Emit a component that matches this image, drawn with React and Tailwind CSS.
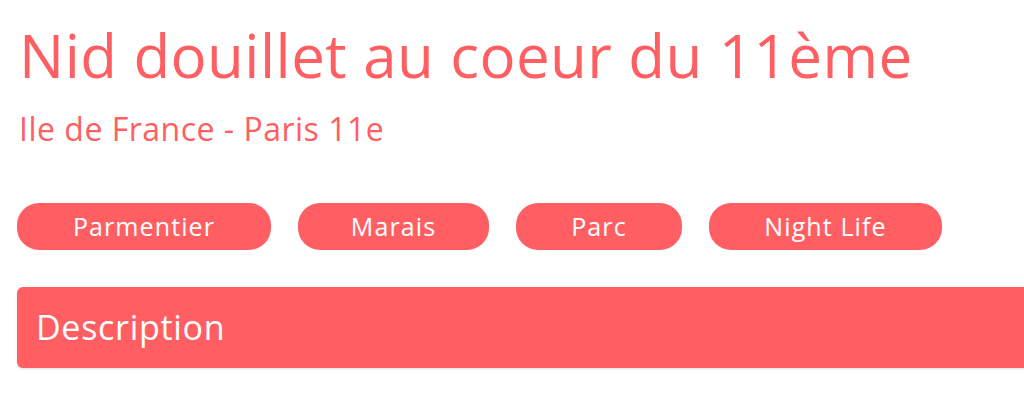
import React from 'react';

const tags = [
  { label: 'Parmentier', w: 'w-[254px]' },
  { label: 'Marais', w: 'w-[191px]' },
  { label: 'Parc', w: 'w-[166px]' },
  { label: 'Night Life', w: 'w-[233px]' },
];

export default function App() {
  return (
    <div className="w-full h-[409px] overflow-hidden bg-white font-['Open_Sans',sans-serif] text-[#ff5f62]">
      <div className="pl-[17px] pt-[19px]">
        <h1 className="pl-[2px] text-[60px] leading-[72px] font-normal tracking-[0.45px]">
          Nid douillet au coeur du 11ème
        </h1>
        <p className="mt-[18px] pl-[2px] text-[32px] leading-[40px] tracking-[0.5px]">
          Ile de France - Paris 11e
        </p>

        {/* tags */}
        <div className="mt-[54px] flex gap-[27px]">
          {tags.map((t) => (
            <span
              key={t.label}
              className={`${t.w} h-[47px] rounded-[22px] bg-[#ff5f62] text-white text-[25px] tracking-[1.1px] flex items-center justify-center`}
            >
              {t.label}
            </span>
          ))}
        </div>

        <div className="mt-[37px] w-[1030px] h-[81px] rounded-l-[6px] bg-[#ff5f62] shadow-sm flex items-center pl-[19px]">
          <span className="text-white text-[34px] tracking-[0.7px]">Description</span>
        </div>
      </div>
    </div>
  );
}
